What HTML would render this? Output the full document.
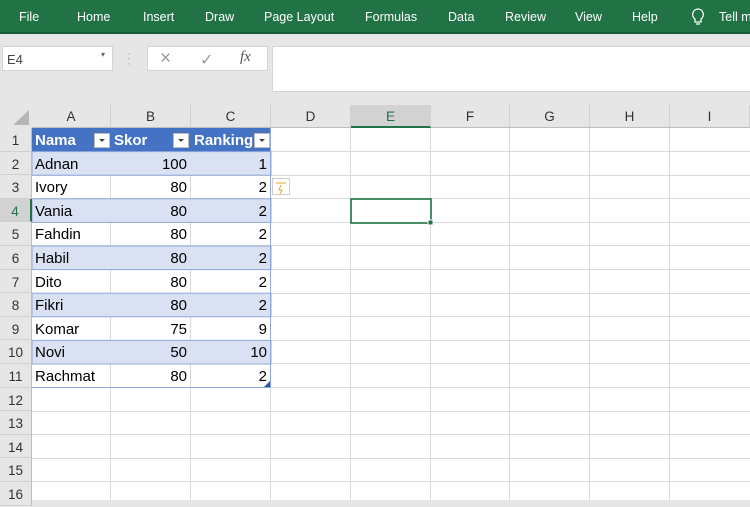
<!DOCTYPE html><html><head><style>
*{margin:0;padding:0;box-sizing:border-box}
body{width:750px;height:500px;overflow:hidden;background:#e6e6e6;font-family:"Liberation Sans",sans-serif;position:relative}
.rib{position:absolute;left:0;top:0;width:750px;height:34px;background:#217346;border-bottom:2px solid #185c37;color:#fff;font-size:12.5px;overflow:hidden}
.rib span{position:absolute;top:10px;white-space:nowrap}
.box{position:absolute;background:#fff;border:1px solid #d4d4d4}
.ch{position:absolute;top:105px;height:23px;background:#e6e6e6;border-right:1px solid #d0d0d0;border-bottom:1px solid #bdbdbd;text-align:center;font-size:13.5px;line-height:23px;color:#333}
.rh{position:absolute;left:0;width:32px;background:#e6e6e6;border-bottom:1px solid #d0d0d0;border-right:1px solid #bdbdbd;text-align:center;font-size:13.5px;color:#333}
.grid{position:absolute;left:32px;top:128px;width:718px;height:372px;background:#fff}
.c{position:absolute;font-size:15px;color:#000;white-space:nowrap;overflow:hidden;padding:0 3px}
</style></head><body>
<div class="rib">
<span style="left:19px">File</span><span style="left:77px">Home</span><span style="left:143px">Insert</span><span style="left:205px">Draw</span><span style="left:264px">Page Layout</span><span style="left:365px">Formulas</span><span style="left:448px">Data</span><span style="left:505px">Review</span><span style="left:575px">View</span><span style="left:632px">Help</span>
<svg style="position:absolute;left:691px;top:8px" width="14" height="18" viewBox="0 0 14 18"><path d="M7 1a5.5 5.5 0 0 0-3 10v3h6v-3A5.5 5.5 0 0 0 7 1zM5 16h4" fill="none" stroke="#fff" stroke-width="1.3"/></svg>
<span style="left:719px">Tell m</span></div>
<div class="box" style="left:2px;top:46px;width:111px;height:25px;font-size:13px;color:#444;padding:5px 4px">E4<span style="position:absolute;right:7px;top:3px;font-size:8px;color:#666">▾</span></div>
<div style="position:absolute;left:127px;top:51px;color:#aaa;font-size:12px;line-height:5px">·<br>·<br>·</div>
<div class="box" style="left:147px;top:46px;width:121px;height:25px;color:#999">
<span style="position:absolute;left:12px;top:1px;font-size:19px">×</span><span style="position:absolute;left:52px;top:3px;font-size:16px">✓</span><span style="position:absolute;left:92px;top:2px;font-size:15px;font-style:italic;font-family:'Liberation Serif',serif;color:#555">fx</span></div>
<div class="box" style="left:272px;top:46px;width:480px;height:46px"></div>
<svg style="position:absolute;left:10px;top:108px" width="20" height="18"><path d="M19 2V17H3Z" fill="#b5b5b5"/></svg>
<div class="ch" style="left:32px;width:79px">A</div><div class="ch" style="left:111px;width:80px">B</div><div class="ch" style="left:191px;width:80px">C</div><div class="ch" style="left:271px;width:80px">D</div><div class="ch" style="left:351px;width:80px;background:#d2d2d2;border-bottom:2px solid #217346;color:#217346">E</div><div class="ch" style="left:431px;width:79px">F</div><div class="ch" style="left:510px;width:80px">G</div><div class="ch" style="left:590px;width:80px">H</div><div class="ch" style="left:670px;width:80px">I</div>
<div class="grid">
<svg width="718" height="372" style="position:absolute;left:0;top:0">
<g stroke="#dadada" stroke-width="1">
<line x1="78.5" y1="0" x2="78.5" y2="372"/><line x1="158.5" y1="0" x2="158.5" y2="372"/><line x1="238.5" y1="0" x2="238.5" y2="372"/><line x1="318.5" y1="0" x2="318.5" y2="372"/><line x1="398.5" y1="0" x2="398.5" y2="372"/><line x1="477.5" y1="0" x2="477.5" y2="372"/><line x1="557.5" y1="0" x2="557.5" y2="372"/><line x1="637.5" y1="0" x2="637.5" y2="372"/>
<line x1="0" y1="23.5" x2="718" y2="23.5"/><line x1="0" y1="47.5" x2="718" y2="47.5"/><line x1="0" y1="70.5" x2="718" y2="70.5"/><line x1="0" y1="94.5" x2="718" y2="94.5"/><line x1="0" y1="117.5" x2="718" y2="117.5"/><line x1="0" y1="141.5" x2="718" y2="141.5"/><line x1="0" y1="165.5" x2="718" y2="165.5"/><line x1="0" y1="188.5" x2="718" y2="188.5"/><line x1="0" y1="212.5" x2="718" y2="212.5"/><line x1="0" y1="235.5" x2="718" y2="235.5"/><line x1="0" y1="259.5" x2="718" y2="259.5"/><line x1="0" y1="283.5" x2="718" y2="283.5"/><line x1="0" y1="306.5" x2="718" y2="306.5"/><line x1="0" y1="330.5" x2="718" y2="330.5"/><line x1="0" y1="353.5" x2="718" y2="353.5"/>
</g>
<rect x="0" y="0" width="239" height="23.6" fill="#4472c4"/>
<g fill="#d9e1f2" stroke="#8ea9db" stroke-width="1">
<rect x="0" y="23.6" width="239" height="23.6"/><rect x="0" y="70.8" width="239" height="23.6"/><rect x="0" y="118" width="239" height="23.6"/><rect x="0" y="165.2" width="239" height="23.6"/><rect x="0" y="212.4" width="239" height="23.6"/>
</g>
<line x1="238.5" y1="0" x2="238.5" y2="259.6" stroke="#8ea9db"/><line x1="0" y1="259.5" x2="239" y2="259.5" stroke="#8ea9db"/>
<path d="M238 253v6h-6z" fill="#2f55a4"/>
<g fill="#fff" stroke="#bbb"><rect x="62.5" y="5.5" width="15" height="14"/><rect x="141.5" y="5.5" width="15" height="14"/><rect x="222.5" y="5.5" width="15" height="14"/></g>
<g fill="#444"><path d="M67 11h6l-3 3z"/><path d="M146 11h6l-3 3z"/><path d="M227 11h6l-3 3z"/></g>
<rect x="240.5" y="50.5" width="17" height="16" fill="#fff" stroke="#ccc"/><path d="M244 55h10M249 57l-2 5h3l-2 4" stroke="#e8a82b" fill="none"/>
<rect x="319" y="71" width="80" height="24" fill="none" stroke="#217346" stroke-width="1.6"/><rect x="396" y="92" width="5" height="5" fill="#217346" stroke="#fff"/>
</svg>
<div class="c" style="left:0;top:4px;color:#fff;font-weight:bold">Nama</div><div class="c" style="left:79px;top:4px;color:#fff;font-weight:bold">Skor</div><div class="c" style="left:159px;top:4px;width:64px;color:#fff;font-weight:bold;padding-right:0">Ranking</div>
</div>
<div id="cells"></div>
<script>
var d=[["Adnan",100,1],["Ivory",80,2],["Vania",80,2],["Fahdin",80,2],["Habil",80,2],["Dito",80,2],["Fikri",80,2],["Komar",75,9],["Novi",50,10],["Rachmat",80,2]],h="";
for(var i=0;i<d.length;i++){var t=128+23.6*(i+1)+4;
h+='<div class="c" style="left:32px;top:'+t+'px">'+d[i][0]+'</div><div class="c" style="left:111px;width:79px;text-align:right;top:'+t+'px">'+d[i][1]+'</div><div class="c" style="left:191px;width:79px;text-align:right;top:'+t+'px">'+d[i][2]+'</div>';}
for(var r=1;r<=16;r++){var s=r==4?'background:#d2d2d2;color:#217346;border-right:2px solid #217346;':'';h+='<div class="rh" style="'+s+'top:'+(128+23.6*(r-1))+'px;height:23.6px;line-height:25px">'+r+'</div>';}
document.getElementById("cells").innerHTML=h;
</script>
</body></html>
